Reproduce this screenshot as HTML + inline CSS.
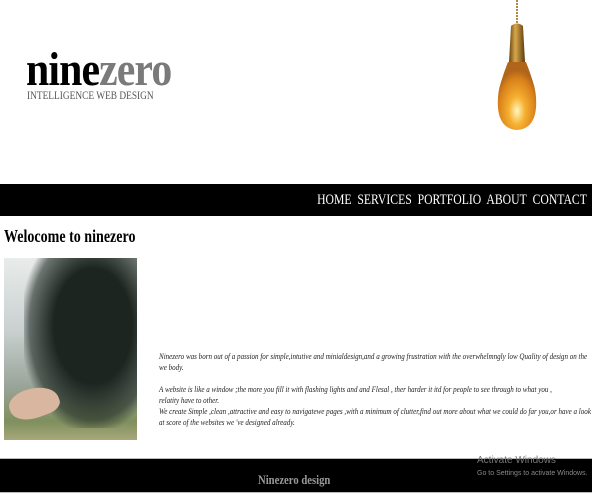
<!DOCTYPE html>
<html><head><meta charset="utf-8"><style>
body{margin:0;width:600px;height:500px;background:#fff;position:relative;overflow:hidden;font-family:"Liberation Serif",serif}
.a{position:absolute}
.c{transform:scaleX(0.78);transform-origin:0 0;white-space:nowrap}
</style></head><body>
<div class="a c" style="left:26px;top:44px;font-size:48px;font-weight:bold;line-height:52px;letter-spacing:-1px;transform:scaleX(0.87)"><span style="color:#000">nine</span><span style="color:#7a7a7a">zero</span></div>
<div class="a c" style="left:27px;top:88px;font-size:12px;color:#555;line-height:14px;transform:scaleX(0.78)">INTELLIGENCE WEB DESIGN</div>
<svg class="a" style="left:490px;top:0" width="56" height="134" viewBox="0 0 56 134">
<defs><radialGradient id="g" cx="0.5" cy="0.72" r="0.6"><stop offset="0" stop-color="#fff7c0"/><stop offset="0.35" stop-color="#f6b030"/><stop offset="0.8" stop-color="#d9801a"/><stop offset="1" stop-color="#b0651a"/></radialGradient>
<linearGradient id="b" x1="0" x2="1"><stop offset="0" stop-color="#6b4410"/><stop offset="0.4" stop-color="#d8a84a"/><stop offset="1" stop-color="#5a3a0e"/></linearGradient></defs>
<line x1="27" y1="0" x2="27" y2="26" stroke="#b08a40" stroke-width="2" stroke-dasharray="2 1"/>
<path d="M21 26 Q27 21 33 26 L35 62 L19 62 Z" fill="url(#b)"/>
<path d="M18 62 L36 62 Q40 72 43 82 Q47 94 46 108 Q44 129 27 130 Q10 129 8 108 Q7 94 11 82 Q14 72 18 62Z" fill="url(#g)"/>
</svg>
<div class="a" style="left:0;top:184px;width:592px;height:32px;background:#000"></div>
<div class="a c" style="right:13px;top:190px;color:#fff;font-size:15px;line-height:20px;transform-origin:100% 0">HOME&nbsp; SERVICES&nbsp; PORTFOLIO&nbsp; ABOUT&nbsp; CONTACT</div>
<div class="a c" style="left:4px;top:226px;font-size:18px;font-weight:bold;line-height:20px">Welocome to ninezero</div>
<div class="a" style="left:4px;top:258px;width:133px;height:182px;background:linear-gradient(180deg,#e8eceb 0%,#c9d0cf 40%,#9aa59a 70%,#7f8f5e 90%,#a8a87a 100%);overflow:hidden">
<div class="a" style="left:20px;top:0px;width:115px;height:170px;background:radial-gradient(ellipse at 60% 40%,#1c251f 40%,rgba(30,40,35,0.6) 65%,transparent 75%)"></div>
<div class="a" style="left:5px;top:130px;width:50px;height:30px;border-radius:40% 60% 30% 50%;background:#d8b6a0;transform:rotate(-20deg)"></div>
</div>
<div class="a" style="left:159px;top:351px;width:528px;font-size:8.6px;font-style:italic;color:#222;line-height:11px;transform:scaleX(0.82);transform-origin:0 0">Ninezero was born out of a passion for simple,intutive and minialdesign,and a growing frustration with the overwhelmngly low Quality of design on the we body.<br><br>A website is like a window ;the more you fill it with flashing lights and and Flesal , ther harder it itd for people to see through to what you ,<br>relatity have to other.<br>We create Simple ,clean ,attractive and easy to navigatewe pages ,with a minimum of clutter,find out more about what we could do far you,or have a look at score of the websites we 've designed already.</div>
<div class="a" style="left:0;top:458px;width:592px;height:33px;background:#000;border-top:1px solid #bbb;border-bottom:1px solid #bbb"></div>
<div class="a c" style="left:258px;top:472px;font-size:13px;font-weight:bold;color:#999;line-height:16px;transform:scaleX(0.82)">Ninezero design</div>
<div class="a" style="left:477px;top:455px;font-family:'Liberation Sans',sans-serif;font-size:10px;color:#777;line-height:12px">Activate Windows</div>
<div class="a" style="left:477px;top:469px;font-family:'Liberation Sans',sans-serif;font-size:7px;color:#888;line-height:10px">Go to Settings to activate Windows.</div>
</body></html>
